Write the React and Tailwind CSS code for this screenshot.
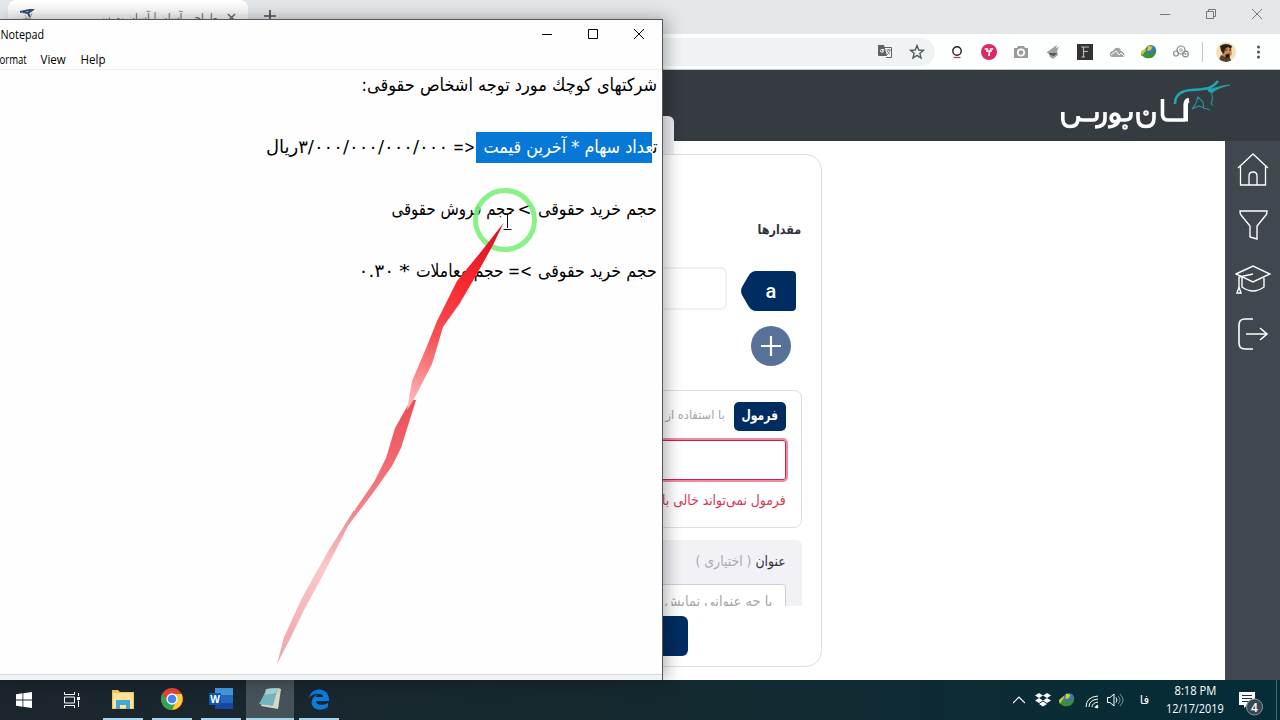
import React, { useLayoutEffect, useRef, useState } from "react";

function Fit({ className, children }) {
  const outer = useRef(null);
  const inner = useRef(null);
  const [scale, setScale] = useState(1);
  useLayoutEffect(() => {
    setScale(outer.current.clientWidth / inner.current.offsetWidth);
  }, []);
  return (
    <div ref={outer} className={"flex shrink-0 justify-center whitespace-nowrap " + className}>
      <span ref={inner} className="inline-block shrink-0 origin-center" style={{ transform: `scaleX(${scale})` }}>
        {children}
      </span>
    </div>
  );
}

const fa = "font-['DejaVu_Sans',sans-serif]";

function Horse({ className }) {
  return (
    <svg className={className} viewBox="0 0 58 34" fill="none" stroke="#22a5b0">
      <path d="M3 24C3 14 10 10.500 20 10C34 9 40 9 46 1" strokeWidth="2.6" />
      <path d="M35 8.500C41 10 49 5 58 5C50 7 44 9 40 13L36 11" fill="#22a5b0" strokeWidth="0.7" />
      <path d="M26 16C25 21 25 24 20 29L27 26L38 30M26 17L31 22L32 29M39 13Q42 18 39 23L41 26" strokeWidth="1.2" opacity=".8" />
    </svg>
  );
}

function Globe({ className }) {
  return (
    <svg className={className} viewBox="0 0 18 16">
      <circle cx="11" cy="6" r="6" fill="#3977b9" />
      <path d="M8 1L13 2L11 6L7 7Z" fill="#dcc934" />
      <path d="M0 8L6 3L5 7C9 12 13 10 17 5C18 12 12 16 8 15C3 15 2 11 0 12Z" fill="#3b9138" />
      <path d="M0 8L6 3L5 7L1 12Z" fill="#d7c53b" />
    </svg>
  );
}

function TabStrip() {
  return (
    <div className="flex h-[34px] bg-[#e3e7ea] pl-2">
      <div className="flex h-full w-[240px] items-start rounded-t-lg bg-gradient-to-b from-white to-[#eceeef] pl-3 pt-[9px]">
        <svg className="h-4 w-4" viewBox="0 0 16 16" fill="none" stroke="#334f77"><path d="M0 3L14 0L8 4M3 3L8 4L10 8" strokeWidth="2" /><path d="M5 6L9 13M12 4L9 13M3 10L11 9" stroke="#aaa" /></svg>
        <Fit className={"ml-[62px] mt-px w-[120px] text-[12px] leading-4 text-[#666] " + fa}><span dir="rtl">طراحی آسان | آسان بورس</span></Fit>
        <svg className="ml-[9px] mt-[4px] h-[9px] w-[9px]" viewBox="0 0 10 10" stroke="#60656a" strokeWidth="1.6"><path d="M1 1L9 9M9 1L1 9" /></svg>
      </div>
      <svg className="ml-4 mt-[10px] h-3 w-3" viewBox="0 0 12 12" stroke="#4c5054" strokeWidth="1.7"><path d="M6 0V12M0 6H12" /></svg>
      <div className="ml-auto flex items-start gap-[35px] pr-[17px] pt-[9px]">
        <svg className="h-[11px] w-[11px]" viewBox="0 0 11 11" stroke="#777"><path d="M0 5.5H10" /></svg>
        <svg className="h-[11px] w-[11px]" viewBox="0 0 11 11" fill="none" stroke="#777"><path d="M.5 2.5H7.5V9.5H.5ZM2.5 2.5V.5H9.5V7.5H7.5" /></svg>
        <svg className="h-[11px] w-[11px]" viewBox="0 0 11 11" stroke="#777"><path d="M0 0L10 10M10 0L0 10" /></svg>
      </div>
    </div>
  );
}

function Toolbar() {
  return (
    <div className="flex h-9 items-center border-b border-[#c5c9cb] bg-[#fdfefe]">
      <div className="flex h-7 w-[935px] shrink-0 items-center justify-end gap-4 rounded-r-full bg-[#f0f3f4] pr-[10px]">
        <svg className="h-4 w-4" viewBox="0 0 16 16"><path d="M6 3.5H14.5V13.5H9" fill="#f7f7f7" stroke="#5f6368" /><path d="M1 1H7L10 12H2Q1 12 1 11Z" fill="#5f6368" /><path d="M7 5.5H4.5Q2.5 6 4 8Q6 9 6.5 6.8H5" fill="none" stroke="#fff" /><path d="M9 6H14M11.5 5V6M10 7Q11 9 13 10.5M13 6Q12 9 10 11" fill="none" stroke="#777" strokeWidth=".9" /></svg>
        <svg className="h-4 w-4" viewBox="0 0 16 16" fill="none" stroke="#53585c" strokeWidth="1.4"><path d="M8 1.5L9.8 6L14.5 6.3L10.9 9.3L12 14L8 11.4L4 14L5.1 9.3L1.5 6.3L6.2 6Z" /></svg>
      </div>
      <div className="flex flex-1 items-center pl-[14px]">
        <svg className="h-4 w-4" viewBox="0 0 16 16" fill="none"><circle cx="8" cy="7" r="4.2" stroke="#222" strokeWidth="1.4" /><path d="M4.500 13.5H11.500" stroke="#b8405c" strokeWidth="1.3" /></svg>
        <svg className="ml-4 h-4 w-4" viewBox="0 0 16 16"><circle cx="8" cy="8" r="8" fill="#df2863" /><path d="M4 5.500Q5 4 7 5.500M12 5.500Q11 4 9 5.500M5 7H11M8.500 7L8 12" fill="none" stroke="#fff" strokeWidth="1.7" /></svg>
        <svg className="ml-4 h-4 w-4" viewBox="0 0 16 16"><path d="M1 4H4L5 2H11L12 4H15V14H1Z" fill="#999" /><circle cx="8" cy="8.5" r="3.2" fill="none" stroke="#fff" strokeWidth="1.8" /></svg>
        <svg className="ml-4 h-4 w-4" viewBox="0 0 16 16"><path d="M2 8L9 3L12 1L11 4L14 3L12 7L13 11L8 15L4 12L7 9L2 9Z" fill="#a0a0a0" /><path d="M3 9H12L9 12L5 11" fill="#555" /></svg>
        <svg className="ml-4 h-4 w-4" viewBox="0 0 16 16"><path d="M0 0H16V16H0Z" fill="#333" /><path d="M6.5 13V3H12M4 3H7M6.5 7.5H11M4.5 13H8" fill="none" stroke="#bbb" strokeWidth="1.2" /></svg>
        <svg className="ml-4 h-4 w-4" viewBox="0 0 16 16"><path d="M3 13Q0 12 1 9Q2 7 4 7Q6 3 10 4Q12 5 12 7Q16 8 15.5 12L14 13Z" fill="#a4a4a4" /><path d="M2 11L7 7L10 11L12 9L15 12" stroke="#fff" fill="none" /></svg>
        <Globe className="ml-4 h-4 w-4" />
        <svg className="ml-4 h-4 w-4" viewBox="0 0 16 16" fill="none" stroke="#888" strokeWidth="1.2"><circle cx="3" cy="9.5" r="2.5" /><circle cx="8" cy="6" r="4" /><circle cx="8" cy="6" r="1.300" strokeWidth=".8" /><circle cx="12.5" cy="10" r="2.8" /><circle cx="12.5" cy="10" r=".4" /></svg>
        <div className="ml-[13px] h-5 w-px bg-[#c5c8ca]" />
        <svg className="ml-[13px] h-5 w-5" viewBox="0 0 20 20"><defs><clipPath id="avatar"><circle cx="10" cy="10" r="10" /></clipPath></defs><g clipPath="url(#avatar)"><path d="M0 0H20V20H0Z" fill="#f3dfb8" /><path d="M6 5L15 4L16 12L12 17L6 14Z" fill="#c98a58" /><path d="M4 4Q10 0 16 4L15 7L12 5L9 7L8 12L5 9Z" fill="#2c201a" /><path d="M2 20L5 13L9 15L13 14L16 20Z" fill="#54451f" /><path d="M9 8H11M13 8H15M10 13L13 12V15L10 16Z" stroke="#3d251c" strokeWidth="1.2" /></g></svg>
        <svg className="ml-[14px] h-4 w-4" viewBox="0 0 16 16" fill="#4d5155"><circle cx="8.500" cy="3" r="1.5" /><circle cx="8.500" cy="8" r="1.5" /><circle cx="8.500" cy="13" r="1.5" /></svg>
      </div>
    </div>
  );
}

function SiteHeader() {
  return (
    <div className="flex h-[71px] shrink-0 justify-end bg-[#353b41] pr-[52px] pt-2">
      <div className="relative h-14 w-[170px]">
        <svg className="h-full w-full" viewBox="0 0 170 56" role="img" aria-label="آسان بورس" fill="none" stroke="#fff" strokeWidth="3.6">
          <path d="M4.800 34V41Q5 48.500 12 48.500Q20 48.500 20 41V38Q20 42 25 42H35Q39 42 39 38V34" />
          <path d="M47 34V41Q47 48.500 37 49" />
          <circle cx="57" cy="40" r="3.800" strokeWidth="3.800" />
          <path d="M60.500 39Q62 48 50 49" />
          <path d="M73 34V37Q73 42 67 42H60" />
          <circle cx="67" cy="49" r="1" />
          <path d="M80 34V40Q80 48.500 88 48.500Q96 48.500 96 40V34" />
          <circle cx="88" cy="35" r="1" />
          <path d="M104.500 21V37Q105 42 110 42H127" />
          <path d="M127.700 43.500V27Q127.700 22.500 131 22" strokeWidth="4.600" />
        </svg>
        <Horse className="absolute left-[114px] top-[2px] h-[34px] w-[58px]" />
      </div>
    </div>
  );
}

function FormCard() {
  return (
    <div dir="rtl" className={"mt-[13px] h-[513px] w-[422px] rounded-[16px] border border-[#dedede] bg-white pl-5 pr-[19px] " + fa}>
      <Fit className="mr-px mt-[65px] h-6 w-[44px] text-[13px] font-bold leading-5 text-[#303238]">مقدارها</Fit>
      <div className="mr-px mt-[25px] flex h-11 items-start">
        <div className="relative mr-[5px] mt-[2px] h-10 w-[55px]">
          <svg className="h-full w-full" viewBox="0 0 55 40"><path d="M15 0H51Q55 0 55 4V36Q55 40 51 40H15Q11 40 8 36L1 24Q-1 20 1 16L8 4Q11 0 15 0Z" fill="#002d61" /></svg>
          <span className="absolute inset-0 flex items-center justify-center pb-px pl-[5px] font-['Roboto',sans-serif] text-[20px] font-medium text-white">a</span>
        </div>
        <div className="mr-[14px] mt-[-2px] h-[43px] w-[200px] rounded-md border-2 border-[#f0f0f1]" />
      </div>
      <div className="mr-[11px] mt-[13px] h-10 w-10 rounded-full bg-[#577198]">
        <svg className="h-10 w-10" viewBox="0 0 40 40" stroke="white" strokeWidth="2.2"><path d="M20 10V30M10 20H30" /></svg>
      </div>
      <div className="mt-6 h-[138px] rounded-lg border border-[#dedfe2] px-[15px] pt-[11px]">
        <div className="flex items-center">
          <div className="flex h-[29px] w-[52px] items-center justify-center rounded-[5px] bg-[#002d61] pb-[2px]"><Fit className="w-9 text-[14px] font-bold text-white">فرمول</Fit></div>
          <Fit className="mb-[3px] mr-[9px] w-[59px] text-[12px] text-[#a4a4a8]">با استفاده از</Fit>
        </div>
        <div className="mt-[9px] h-10 rounded-[3px] border border-[#c92350] ring-2 ring-[#f28a9f]" />
        <Fit className="mt-[10px] w-[124px] text-[14px] leading-5 text-[#d93454]">فرمول نمی‌تواند خالی با</Fit>
      </div>
      <div className="mt-3 h-[66px] overflow-hidden rounded-t-md bg-[#f1f1f6] px-[16px] pt-[11px]">
        <Fit className="h-5 w-[90px] text-[14px] leading-5 text-[#303238]">عنوان <span className="text-[#aaaab0]">( اختیاری )</span></Fit>
        <div className="mt-[13px] h-12 rounded-[4px] border border-[#cecfd4] bg-white px-[13px] pt-[6px]"><Fit className="w-[108px] text-[14px] leading-5 text-[#a5a5aa]">با چه عنوانی نمایش</Fit></div>
      </div>
      <div className="mr-[114px] mt-[10px] h-10 w-28 rounded-md bg-[#002d61]" />
    </div>
  );
}

function Sidebar() {
  return (
    <div className="flex w-[55px] flex-col items-center bg-[#40474e] pt-[11px]">
      <svg className="h-9 w-9" viewBox="0 0 36 36" fill="none" stroke="white" strokeWidth="1.3"><path d="M3 16L18 2L33 16M5.500 14V33H30.500V14M14 33V24Q14 20 18 20Q22 20 22 24V33" /></svg>
      <svg className="mt-[19px] h-9 w-9" viewBox="0 0 36 36" fill="none" stroke="white" strokeWidth="1.4"><path d="M5 4H32Q32 7 31 8L22 19V32L15 30V19L6 8Q5 7 5 4Z" /></svg>
      <svg className="mt-[19px] h-9 w-9" viewBox="0 0 36 36" fill="none" stroke="white" strokeWidth="1.4"><path d="M1 12L18 4L35 12L18 20ZM7 15V25Q18 33 29 25V16M18 12L4 15V27M2 31L4 25L6 31Z" /></svg>
      <svg className="mt-[18px] h-9 w-9" viewBox="0 0 36 36" fill="none" stroke="white" strokeWidth="1.6"><path d="M18 3H10Q4 3 4 9V27Q4 33 10 33H18M11 18H32M25 12L32 18L25 24" /></svg>
    </div>
  );
}

function Browser() {
  return (
    <div className="flex h-[680px] w-full flex-col bg-white">
      <TabStrip />
      <Toolbar />
      <SiteHeader />
      <div className="flex min-h-0 flex-1">
        <div className="flex flex-1 pl-[400px]"><FormCard /></div>
        <Sidebar />
      </div>
      <div className="absolute left-[640px] top-[116px] h-[38px] w-[34px] rounded-tr-md bg-[#f0f0f3]" />
    </div>
  );
}

function Notepad() {
  return (
    <div className="absolute left-0 top-[19px] flex h-[661px] w-[663px] flex-col border-r border-t border-[#55585b] bg-[#fefefe] shadow-[3px_0_16px_rgba(0,0,0,0.32)]">
      <div className="flex h-[30px] items-center font-['Open_Sans',sans-serif] text-[12px] text-black">
        <Fit className="w-11">Notepad</Fit>
        <div className="mb-[2px] ml-auto flex gap-[35px] pr-[17px]">
          <svg className="h-[11px] w-[11px]" viewBox="0 0 11 11" stroke="#000"><path d="M0 5.5H10" /></svg>
          <svg className="h-[11px] w-[11px]" viewBox="0 0 11 11" fill="none" stroke="#000"><path d="M.5.5H9.5V9.5H.5Z" /></svg>
          <svg className="h-[11px] w-[11px]" viewBox="0 0 11 11" stroke="#000"><path d="M0 0L10 10M10 0L0 10" /></svg>
        </div>
      </div>
      <div className="flex h-5 items-center gap-[14px] border-b border-[#f0f0f0] font-['Open_Sans',sans-serif] text-[12px] text-black">
        <Fit className="w-[27px]">ormat</Fit><Fit className="w-[25px]">View</Fit><Fit className="w-[25px]">Help</Fit>
      </div>
      <div dir="rtl" className={"flex-1 pr-[5px] text-[18px] leading-[29px] text-black " + fa}>
        <Fit className="h-[62px] w-[296px]">شرکتهای کوچك مورد توجه اشخاص حقوقی:</Fit>
        <div className="flex h-[62px]">
          <div className="relative h-[31px] w-[181px]">
            <div className="absolute left-0 top-0 h-[31px] w-[176px] bg-[#0878d7]" />
            <Fit className="relative w-[174px] text-white"><span className="text-black">ت</span>عداد سهام * آخرین قیمت</Fit>
          </div>
          <Fit className="mr-px w-[22px]">&lt;=</Fit>
          <Fit className="mr-[5px] w-[182px]"><span dir="ltr"><bdi dir="rtl">ریال</bdi>۳/۰۰۰/۰۰۰/۰۰۰/۰۰۰</span></Fit>
        </div>
        <div className="flex h-[62px]">
          <Fit className="w-[119px]">حجم خرید حقوقی</Fit>
          <Fit className="mr-[6px] w-[14px]">&gt;</Fit>
          <Fit className="mr-[3px] w-[124px]">حجم فروش حقوقی</Fit>
        </div>
        <div className="flex h-[62px]">
          <Fit className="w-[119px]">حجم خرید حقوقی</Fit>
          <Fit className="mr-[6px] w-[24px]">&gt;=</Fit>
          <Fit className="mr-[4px] w-[88px]">حجم معاملات</Fit>
          <Fit className="mr-[6px] w-[11px]">*</Fit>
          <Fit className="mr-[5px] w-[36px]"><span dir="ltr">۰.۳۰</span></Fit>
        </div>
      </div>
      <div className="h-[6px] border-t border-[#dfd4d7] bg-[#f1f2f3]" />
    </div>
  );
}

function Annotation() {
  return (
    <svg className="absolute left-0 top-0 h-[720px] w-[1280px]" viewBox="0 0 1280 720">
      <defs>
        <linearGradient id="upper" gradientUnits="userSpaceOnUse" x1="500" y1="225" x2="410" y2="405"><stop stopColor="#da1020" /><stop offset=".35" stopColor="#f92930" /><stop offset=".65" stopColor="#f65358" /><stop offset="1" stopColor="#ffbabb" /></linearGradient>
        <linearGradient id="middle" gradientUnits="userSpaceOnUse" x1="410" y1="400" x2="352" y2="522"><stop stopColor="#ed4c55" /><stop offset="1" stopColor="#f7898f" /></linearGradient>
        <linearGradient id="lower" gradientUnits="userSpaceOnUse" x1="350" y1="512" x2="278" y2="664"><stop stopColor="#e78b92" /><stop offset=".35" stopColor="#fac9ca" /><stop offset="1" stopColor="#f0a3ac" /></linearGradient>
      </defs>
      <circle cx="505" cy="220" r="29.5" fill="none" stroke="#7bef7b" strokeOpacity=".9" strokeWidth="5" />
      <path d="M404 412L411 400L416 400L401 448L392 466L373 493L347 527L356 508L374 482L386 458L395 428Z" fill="url(#middle)" />
      <path d="M503.500 223L493 245L478 272L460 303L443 327L438 344L432 364L413 401L407 410L412 381L427 346L437 321L445 305L457 281L480 253Z" fill="url(#upper)" />
      <path d="M354 510L355 512L342 538L322 577L304 610L291 637L277 664L284 637L302 598L327 553Z" fill="url(#lower)" />
      <path d="M503.500 213.500H506L507.500 215L509 213.500H511.500M507.500 215V228M503.500 229.500H511.500" fill="none" stroke="#111" />
    </svg>
  );
}

function Running({ active, children }) {
  return <div className={"flex h-10 flex-col items-center justify-between " + (active ? "w-12 bg-[#455258]" : "w-10")}><div className="flex h-[38px] items-center">{children}</div><div className="h-[2px] w-full bg-[#a6d3ee]" /></div>;
}

function Taskbar() {
  return (
    <div className="flex h-10 items-center bg-gradient-to-r from-[#1b252c] via-[#14292f] to-[#032d38] text-white">
      <svg className="ml-4 h-4 w-4" viewBox="0 0 16 16" fill="white"><path d="M0 2.2L6.5 1.3V7.6H0ZM7.3 1.2L16 0V7.6H7.3ZM0 8.4H6.5V14.700L0 13.8ZM7.3 8.4H16V16L7.3 14.800Z" /></svg>
      <svg className="ml-8 h-4 w-4" viewBox="0 0 16 16" fill="none" stroke="white"><path d="M.5 0V2.500H10.5V0M.5 5H10.5V11H.5ZM.5 16V13.500H10.5V16M14.500 1V4M14.500 8.500V15" /><path d="M13 5H16V8H13Z" fill="white" stroke="none" /></svg>
      <div className="ml-[23px] flex w-10"><Running><svg className="h-5 w-[22px]" viewBox="0 0 22 20"><path d="M0 1H6L8 3H22V20H0Z" fill="#f3c85f" /><path d="M1 4H21V19H1Z" fill="#ffe29a" /><path d="M4 11H18V20H14V16H8V20H4Z" fill="#43a6d6" /></svg></Running></div>
      <div className="ml-[9px]"><Running><svg className="h-[22px] w-[22px]" viewBox="0 0 22 22"><circle cx="11" cy="11" r="11" fill="#e64335" /><path d="M11 6H20.800Q24 16 15 21L11 22L15 13Z" fill="#ffcc33" /><path d="M1.500 5.500L6.500 13.500Q9 17 14 15L11 22Q3 22 .5 14Q-1 9 1.500 5.500Z" fill="#30a350" /><circle cx="11" cy="11" r="5" fill="#4385f4" stroke="white" strokeWidth="1.3" /></svg></Running></div>
      <div className="ml-[9px]"><Running><svg className="h-[22px] w-6" viewBox="0 0 24 22"><path d="M6 0H24V21H6Z" fill="#2268bd" /><path d="M6 0H24V7H6Z" fill="#4597df" /><path d="M6 15H24V21H6Z" fill="#1846a0" /><path d="M0 5H12V17H0Z" fill="#1456ac" /><text x="6" y="14.500" fontSize="10" fontWeight="700" fontFamily="Open Sans" textAnchor="middle" fill="white">W</text></svg></Running></div>
      <div className="ml-[5px]"><Running active><svg className="h-6 w-6" viewBox="0 0 24 24"><path d="M8 2L20 1L23 2L20 22L3 19Z" fill="#d9d8c8" /><path d="M9 2L20 1L15 19L1 17Z" fill="#74b5bd" /><path d="M9 2L20 1L18 6L7 8Z" fill="#a8d5d9" /></svg></Running></div>
      <div className="ml-[5px]"><Running><svg className="h-[21px] w-[21px]" viewBox="0 0 21 21"><path d="M0 9C2 0 12-2 18 4Q20 7 20 12H7Q8 18 17 15L19 14V18Q13 22 7 20Q0 16 4 9Q6 6 10 5Q4 4 0 9ZM7 8H14Q14 5 10.500 5Q7.500 5 7 8Z" fill="#087ddd" fillRule="evenodd" /></svg></Running></div>
      <div className="ml-auto flex items-center pr-[3px]">
        <svg className="h-3 w-3" viewBox="0 0 12 12" fill="none" stroke="white" strokeWidth="1.2"><path d="M0 9L6 3L12 9" /></svg>
        <svg className="ml-[10px] h-4 w-4" viewBox="0 0 16 16" fill="white"><path d="M4 1L8 3.500L4 6L0 3.500ZM12 1L16 3.500L12 6L8 3.500ZM4 6L8 8.500L4 11L0 8.500ZM12 6L16 8.500L12 11L8 8.500ZM8 9.500L12 12L8 14.500L4 12Z" /></svg>
        <Globe className="ml-2 h-4 w-4" />
        <svg className="ml-[10px] mt-[3px] h-[14px] w-[14px]" viewBox="0 0 14 14" fill="none" stroke="white"><path d="M1 12Q1 2 13 1M4 12Q4 5 13 4M7 12Q7 8 13 7M10 13Q10 11 13 10" /><circle cx="12" cy="12" r="1" fill="white" /></svg>
        <svg className="ml-2 h-4 w-[17px]" viewBox="0 0 17 16" fill="none" stroke="white"><path d="M.5 5.500H3L7 2V14L3 10.500H.5ZM9 5.500Q11 8 9 10.500" /><path d="M11 4Q15 8 11 12M13 2Q19 8 13 14" stroke="#779299" /></svg>
        <Fit className={"ml-[16px] w-[9px] text-[12px] " + fa}>فا</Fit>
        <div className="ml-[17px] flex w-[58px] flex-col items-center font-['Open_Sans',sans-serif] text-[12px] leading-[18px]"><Fit className="w-[42px]">8:18 PM</Fit><Fit className="w-[58px]">12/17/2019</Fit></div>
        <svg className="ml-[14px] mt-[7px] h-7 w-7" viewBox="0 0 28 28"><path d="M1 2H17V15H9L6 18V15H1Z" fill="white" /><path d="M4 5.500H14M4 8.500H14M4 11.500H11" stroke="#163740" /><circle cx="16.500" cy="17" r="8" fill="#38474e" stroke="#8b989d" /><text x="16.500" y="21.500" fontSize="12" fontWeight="600" fontFamily="Open Sans" textAnchor="middle" fill="white">4</text></svg>
        <div className="ml-[10px] h-10 w-px bg-[#49656d]" />
      </div>
    </div>
  );
}

export default function App() {
  return <div className="relative h-[720px] w-[1280px] overflow-hidden"><Browser /><Notepad /><Annotation /><Taskbar /></div>;
}
